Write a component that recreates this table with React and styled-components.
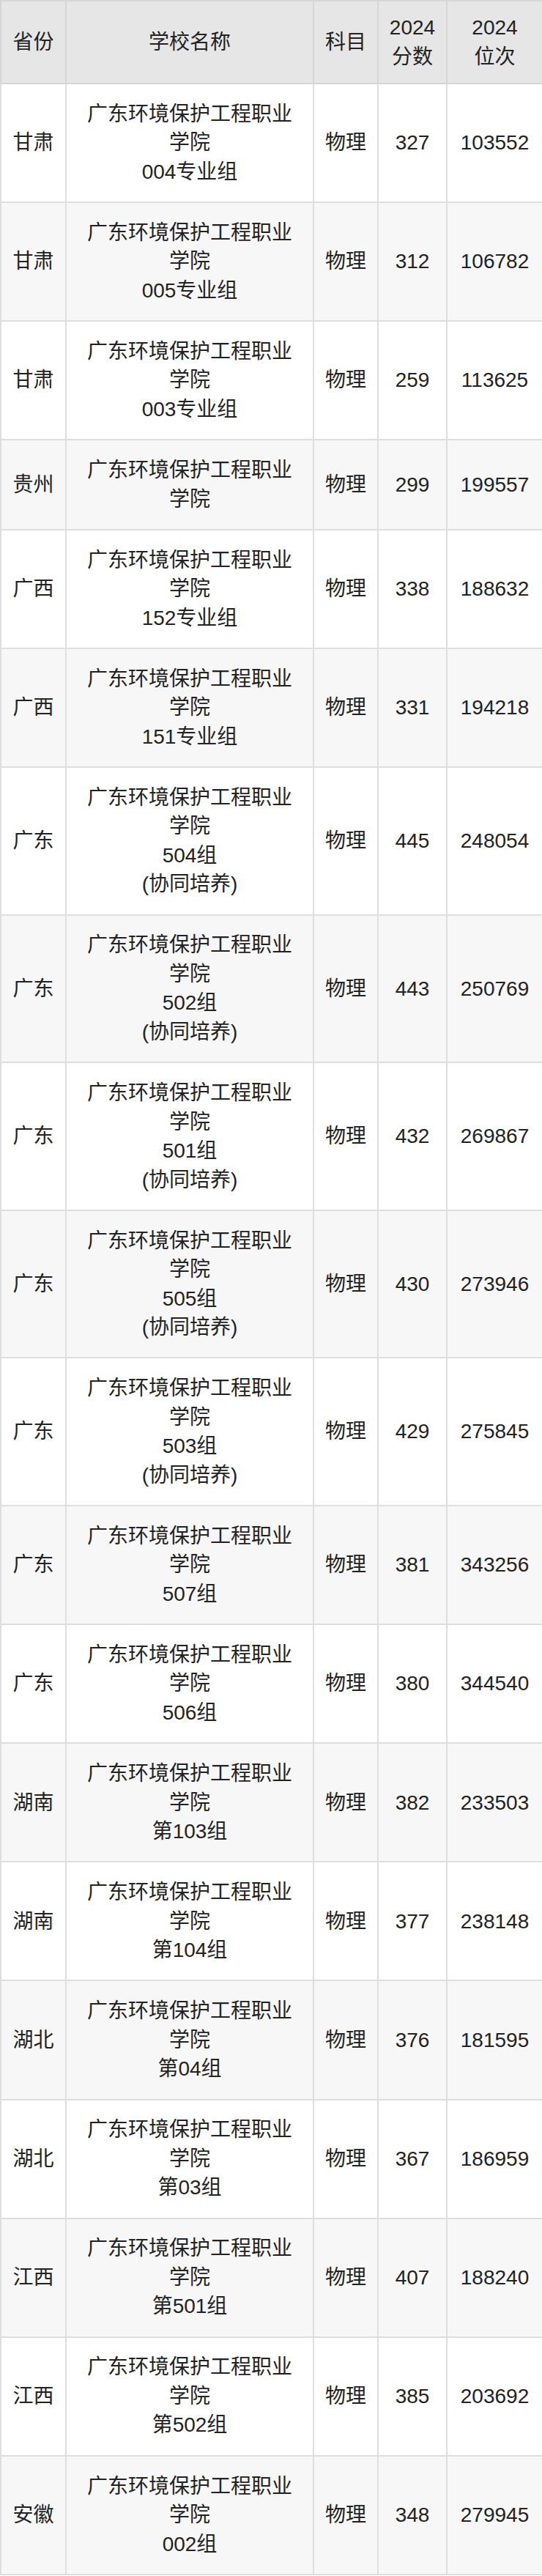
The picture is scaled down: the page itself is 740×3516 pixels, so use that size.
import React from 'react'
import styled, { createGlobalStyle } from 'styled-components'

const GlobalStyle = createGlobalStyle`
  html, body {
    margin: 0;
    padding: 0;
    background: #fff;
  }
  body {
    font-family: "Liberation Sans", Arial, "Noto Sans CJK SC", sans-serif;
    color: #222;
  }
`

const Table = styled.table`
  width: 740px;
  border-collapse: collapse;
  table-layout: fixed;
  font-size: 28px;
  line-height: 39.5px;
  border: 2px solid #d6d6d6;
`

const HeadCell = styled.th`
  background: #e6e6e6;
  font-weight: normal;
  padding: 16px 4px;
  text-align: center;
  vertical-align: middle;
  border: 2px solid #d6d6d6;
`

const Row = styled.tr`
  background: ${p => (p.$alt ? '#f7f7f7' : '#fff')};
`

const Cell = styled.td`
  padding: 20.8px 4px;
  text-align: center;
  vertical-align: middle;
  border: 2px solid #dedede;
`

const Line = styled.div``

const school = '广东环境保护工程职业'

const rows = [
  ['甘肃', ['004专业组'], '327', '103552'],
  ['甘肃', ['005专业组'], '312', '106782'],
  ['甘肃', ['003专业组'], '259', '113625'],
  ['贵州', [], '299', '199557'],
  ['广西', ['152专业组'], '338', '188632'],
  ['广西', ['151专业组'], '331', '194218'],
  ['广东', ['504组', '(协同培养)'], '445', '248054'],
  ['广东', ['502组', '(协同培养)'], '443', '250769'],
  ['广东', ['501组', '(协同培养)'], '432', '269867'],
  ['广东', ['505组', '(协同培养)'], '430', '273946'],
  ['广东', ['503组', '(协同培养)'], '429', '275845'],
  ['广东', ['507组'], '381', '343256'],
  ['广东', ['506组'], '380', '344540'],
  ['湖南', ['第103组'], '382', '233503'],
  ['湖南', ['第104组'], '377', '238148'],
  ['湖北', ['第04组'], '376', '181595'],
  ['湖北', ['第03组'], '367', '186959'],
  ['江西', ['第501组'], '407', '188240'],
  ['江西', ['第502组'], '385', '203692'],
  ['安徽', ['002组'], '348', '279945'],
]

export default function App() {
  return (
    <>
      <GlobalStyle />
      <Table>
        <colgroup>
          <col style={{ width: 89 }} />
          <col style={{ width: 338 }} />
          <col style={{ width: 88 }} />
          <col style={{ width: 94 }} />
          <col style={{ width: 131 }} />
        </colgroup>
        <thead>
          <tr>
            <HeadCell>省份</HeadCell>
            <HeadCell>学校名称</HeadCell>
            <HeadCell>科目</HeadCell>
            <HeadCell>2024<br />分数</HeadCell>
            <HeadCell>2024<br />位次</HeadCell>
          </tr>
        </thead>
        <tbody>
          {rows.map((r, i) => (
            <Row key={i} $alt={i % 2 === 1}>
              <Cell>{r[0]}</Cell>
              <Cell>
                <Line>{school}</Line>
                <Line>学院</Line>
                {r[1].map(l => <Line key={l}>{l}</Line>)}
              </Cell>
              <Cell>物理</Cell>
              <Cell>{r[2]}</Cell>
              <Cell>{r[3]}</Cell>
            </Row>
          ))}
        </tbody>
      </Table>
    </>
  )
}
